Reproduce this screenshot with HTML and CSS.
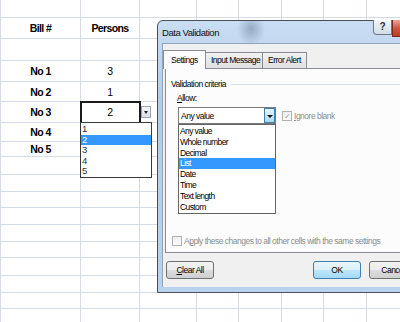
FILE: index.html
```html
<!DOCTYPE html>
<html lang="en">
<head>
    <meta charset="UTF-8">
    <meta name="viewport" content="width=device-width, initial-scale=1.0">
    <title>Data Validation</title>
    <link rel="stylesheet" href="styles.css">
</head>
<body>
    <div class="screen">
        <div class="sheet">
            <!-- row 1 -->
            <div class="c"></div><div class="c"></div><div class="c"></div><div class="c"></div><div class="c"></div><div class="c"></div><div class="c"></div><div class="c"></div>
            <!-- row 2: headers -->
            <div class="c b">Bill #</div><div class="c b">Persons</div><div class="c"></div><div class="c"></div><div class="c"></div><div class="c"></div><div class="c"></div><div class="c"></div>
            <!-- row 3 -->
            <div class="c"></div><div class="c"></div><div class="c"></div><div class="c"></div><div class="c"></div><div class="c"></div><div class="c"></div><div class="c"></div>
            <!-- row 4 -->
            <div class="c b">No 1</div><div class="c">3</div><div class="c"></div><div class="c"></div><div class="c"></div><div class="c"></div><div class="c"></div><div class="c"></div>
            <!-- row 5 -->
            <div class="c b">No 2</div><div class="c">1</div><div class="c"></div><div class="c"></div><div class="c"></div><div class="c"></div><div class="c"></div><div class="c"></div>
            <!-- row 6: active cell with its list -->
            <div class="c b">No 3</div>
            <div class="c sel">2
                <span class="cell-arrow"></span>
                <ul class="cell-list">
                    <li>1</li>
                    <li class="hi">2</li>
                    <li>3</li>
                    <li>4</li>
                    <li>5</li>
                </ul>
            </div>
            <div class="c"></div><div class="c"></div><div class="c"></div><div class="c"></div><div class="c"></div><div class="c"></div>
            <!-- row 7 -->
            <div class="c b">No 4</div><div class="c"></div><div class="c"></div><div class="c"></div><div class="c"></div><div class="c"></div><div class="c"></div><div class="c"></div>
            <!-- row 8 -->
            <div class="c b">No 5</div><div class="c"></div><div class="c"></div><div class="c"></div><div class="c"></div><div class="c"></div><div class="c"></div><div class="c"></div>
            <!-- rows 9 - 18 -->
            <div class="c"></div><div class="c"></div><div class="c"></div><div class="c"></div><div class="c"></div><div class="c"></div><div class="c"></div><div class="c"></div>
            <div class="c"></div><div class="c"></div><div class="c"></div><div class="c"></div><div class="c"></div><div class="c"></div><div class="c"></div><div class="c"></div>
            <div class="c"></div><div class="c"></div><div class="c"></div><div class="c"></div><div class="c"></div><div class="c"></div><div class="c"></div><div class="c"></div>
            <div class="c"></div><div class="c"></div><div class="c"></div><div class="c"></div><div class="c"></div><div class="c"></div><div class="c"></div><div class="c"></div>
            <div class="c"></div><div class="c"></div><div class="c"></div><div class="c"></div><div class="c"></div><div class="c"></div><div class="c"></div><div class="c"></div>
            <div class="c"></div><div class="c"></div><div class="c"></div><div class="c"></div><div class="c"></div><div class="c"></div><div class="c"></div><div class="c"></div>
            <div class="c"></div><div class="c"></div><div class="c"></div><div class="c"></div><div class="c"></div><div class="c"></div><div class="c"></div><div class="c"></div>
            <div class="c"></div><div class="c"></div><div class="c"></div><div class="c"></div><div class="c"></div><div class="c"></div><div class="c"></div><div class="c"></div>
            <div class="c"></div><div class="c"></div><div class="c"></div><div class="c"></div><div class="c"></div><div class="c"></div><div class="c"></div><div class="c"></div>
            <div class="c"></div><div class="c"></div><div class="c"></div><div class="c"></div><div class="c"></div><div class="c"></div><div class="c"></div><div class="c"></div>
        </div>

        <div class="dialog">
            <div class="titlebar">
                <span class="title">Data Validation</span>
                <span class="help-btn">?</span>
                <span class="close-btn"></span>
            </div>
            <div class="client">
                <div class="tabs">
                    <span class="tab active">Settings</span>
                    <span class="tab">Input Message</span>
                    <span class="tab">Error Alert</span>
                </div>
                <div class="panel">
                    <div class="group-title"><span>Validation criteria</span></div>
                    <div class="allow-label"><u>A</u>llow:</div>
                    <div class="allow-row">
                        <div class="combo">
                            <span class="combo-text">Any value</span>
                            <span class="combo-btn"></span>
                            <ul class="combo-list">
                                <li>Any value</li>
                                <li>Whole number</li>
                                <li>Decimal</li>
                                <li class="hi">List</li>
                                <li>Date</li>
                                <li>Time</li>
                                <li>Text length</li>
                                <li>Custom</li>
                            </ul>
                        </div>
                        <label class="check off"><span class="box">&#10003;</span><u>I</u>gnore blank</label>
                    </div>
                    <label class="check off apply"><span class="box"></span>A<u>p</u>ply these changes to all other cells with the same settings</label>
                </div>
                <div class="buttons">
                    <button type="button"><u>C</u>lear All</button>
                    <button type="button" class="ok">OK</button>
                    <button type="button" class="cancel">Cancel</button>
                </div>
            </div>
        </div>
    </div>
</body>
</html>
```

FILE: styles.css
```css
body {
    margin: 0;
    padding: 0;
    background-color: #fff;
    font-family: "Liberation Sans", Arial, sans-serif;
}

ul {
    list-style: none;
    margin: 0;
    padding: 0;
}

.screen {
    position: relative;
    width: 400px;
    height: 322px;
    overflow: hidden;
}

/* spreadsheet grid */
.sheet {
    display: grid;
    grid-template-columns: 80px 59px 57px 42px 43px 42px 43px 42px;
    grid-template-rows: 18px 21px 22px 21px 20px 21px 19px 15px 18px 17px 16px 17px 17px 16px 18px 17px 16px 17px;
    border-left: 1px solid #d5dbe6;
    width: max-content;
}

.c {
    box-sizing: border-box;
    border-right: 1px solid #d5dbe6;
    border-bottom: 1px solid #d5dbe6;
    display: flex;
    align-items: center;
    justify-content: center;
    font-size: 10.5px;
    letter-spacing: -0.4px;
    color: #000;
}

.c.b {
    font-weight: bold;
    letter-spacing: -0.6px;
}

.sel {
    position: relative;
    outline: 2px solid #1a1a1a;
    outline-offset: -1px;
    z-index: 1;
}

.cell-arrow {
    position: absolute;
    left: calc(100% + 2px);
    top: 4px;
    width: 10px;
    height: 12px;
    box-sizing: border-box;
    border: 1px solid #9ea4ad;
    background: linear-gradient(#f4f6f9, #d9dee6);
}

.cell-arrow::after {
    content: "";
    position: absolute;
    left: 2px;
    top: 4px;
    border-left: 2px solid transparent;
    border-right: 2px solid transparent;
    border-top: 3px solid #222;
}

.cell-list {
    position: absolute;
    left: -1px;
    top: 100%;
    width: 72px;
    height: 56px;
    box-sizing: border-box;
    border: 1px solid #3a3a3a;
    background-color: #fff;
    padding-top: 1px;
}

.cell-list li {
    height: 10.6px;
    line-height: 10.6px;
    font-size: 9.5px;
    padding-left: 1px;
    color: #1f2f4f;
}

.cell-list li.hi,
.combo-list li.hi {
    background-color: #3399ff;
    color: #fff;
}

/* dialog window */
.dialog {
    position: absolute;
    left: 157px;
    top: 20px;
    width: 262px;
    height: 273px;
    box-sizing: border-box;
    border: 1px solid #4a4f57;
    border-radius: 6px 0 0 0;
    background: linear-gradient(#c9ddf3, #b3cce9 30%, #b9d2ee);
    font-size: 8.5px;
    letter-spacing: -0.5px;
    color: #000;
    white-space: nowrap;
}

.titlebar {
    position: relative;
    height: 22px;
    display: flex;
    align-items: center;
    padding-left: 4px;
    background: radial-gradient(ellipse 14px 16px at 93px 8px, rgba(90, 110, 140, 0.45), rgba(90, 110, 140, 0));
}

.title {
    font-size: 9.5px;
    letter-spacing: -0.45px;
    color: #111;
}

.help-btn {
    position: absolute;
    left: 215px;
    top: -1px;
    width: 19px;
    height: 15px;
    box-sizing: border-box;
    border: 1px solid #6c7888;
    border-top: none;
    border-radius: 0 0 0 4px;
    background: linear-gradient(#f4f7fb, #d3dce8);
    font-size: 10px;
    font-weight: bold;
    letter-spacing: 0;
    line-height: 14px;
    text-align: center;
    color: #2a2f38;
}

.close-btn {
    position: absolute;
    left: 234px;
    top: -1px;
    width: 40px;
    height: 17px;
    box-sizing: border-box;
    border: 1px solid #7b2b1f;
    border-top: none;
    background: linear-gradient(#e8a596, #cf5a43 50%, #c0391f);
}

.client {
    margin-left: 4px;
    height: 244px;
    box-sizing: border-box;
    border-top: 1px solid #8fa3bb;
    border-left: 1px solid #8fa3bb;
    background-color: #f0f0f0;
    padding: 6px 0 0 2px;
    display: flex;
    flex-direction: column;
}

.tabs {
    display: flex;
    align-items: flex-end;
    height: 18px;
    margin-left: -2px;
}

.tab {
    box-sizing: border-box;
    height: 16px;
    border: 1px solid #898c95;
    border-bottom: none;
    background: linear-gradient(#f2f2f2, #e0e0e0);
    padding: 0 0 0 5px;
    line-height: 15px;
    margin-left: -1px;
    overflow: hidden;
}

.tab:nth-child(1) {
    width: 43px;
}

.tab:nth-child(2) {
    width: 58px;
}

.tab:nth-child(3) {
    width: 45px;
}

.tab.active {
    height: 19px;
    margin-bottom: -1px;
    background: #fcfcfc;
    position: relative;
    z-index: 1;
    line-height: 18px;
    margin-left: 0;
    padding-left: 7px;
}

.panel {
    position: relative;
    height: 185px;
    box-sizing: border-box;
    border: 1px solid #898c95;
    background-color: #fcfcfc;
    padding: 9px 0 6px 5px;
    display: flex;
    flex-direction: column;
}

.group-title {
    display: flex;
    align-items: center;
    height: 12px;
}

.group-title::after {
    content: "";
    flex: 1;
    margin-left: 5px;
    border-top: 1px solid #d5dfe5;
}

.allow-label {
    margin: 2px 0 0 6px;
    height: 12px;
    line-height: 12px;
}

.allow-row {
    display: flex;
    align-items: center;
    margin: 3px 0 0 7px;
}

.combo {
    position: relative;
    width: 98px;
    height: 17px;
    box-sizing: border-box;
    border: 1px solid #7a7a7a;
    background-color: #fff;
    display: flex;
    align-items: center;
}

.combo-text {
    flex: 1;
    padding-left: 2px;
}

.combo-btn {
    position: relative;
    width: 11px;
    height: 15px;
    box-sizing: border-box;
    border: 1px solid #3c7fb1;
    background: linear-gradient(#e5f4fc, #a9d9f5);
}

.combo-btn::after {
    content: "";
    position: absolute;
    left: 2px;
    top: 6px;
    border-left: 3px solid transparent;
    border-right: 3px solid transparent;
    border-top: 3px solid #111;
}

.combo-list {
    position: absolute;
    left: -1px;
    top: 16px;
    width: 98px;
    height: 90px;
    box-sizing: border-box;
    border: 1px solid #646464;
    background-color: #fff;
    padding-top: 1px;
    z-index: 2;
}

.combo-list li {
    height: 10.8px;
    line-height: 10.8px;
    padding-left: 1px;
    letter-spacing: -0.6px;
}

.check {
    display: flex;
    align-items: center;
}

.check.off {
    color: #8d8d8d;
}

.check .box {
    width: 10px;
    height: 10px;
    box-sizing: border-box;
    border: 1px solid #b1b1b1;
    background: linear-gradient(#f0f0f0, #fbfbfb);
    margin-right: 2px;
    font-size: 8px;
    letter-spacing: 0;
    line-height: 9px;
    text-align: center;
    color: #9a9a9a;
}

.allow-row .check {
    margin-left: 6px;
}

.check.apply {
    margin-top: auto;
    margin-left: 1px;
}

.buttons {
    display: flex;
    margin-top: 8px;
    padding-left: 1px;
}

button {
    width: 48px;
    height: 18px;
    box-sizing: border-box;
    border: 1px solid #707070;
    border-radius: 3px;
    background: linear-gradient(#f3f3f3, #ebebeb 50%, #dddddd 51%, #cfcfcf);
    font-family: inherit;
    font-size: 8.5px;
    letter-spacing: -0.5px;
    color: #000;
    padding: 0;
    cursor: pointer;
}

button.ok {
    margin-left: 99px;
    border-color: #3c7fb1;
    background: linear-gradient(#eaf6fd, #d9f0fc 50%, #bee6fd 51%, #a7d9f5);
}

button.cancel {
    margin-left: 8px;
}
```
